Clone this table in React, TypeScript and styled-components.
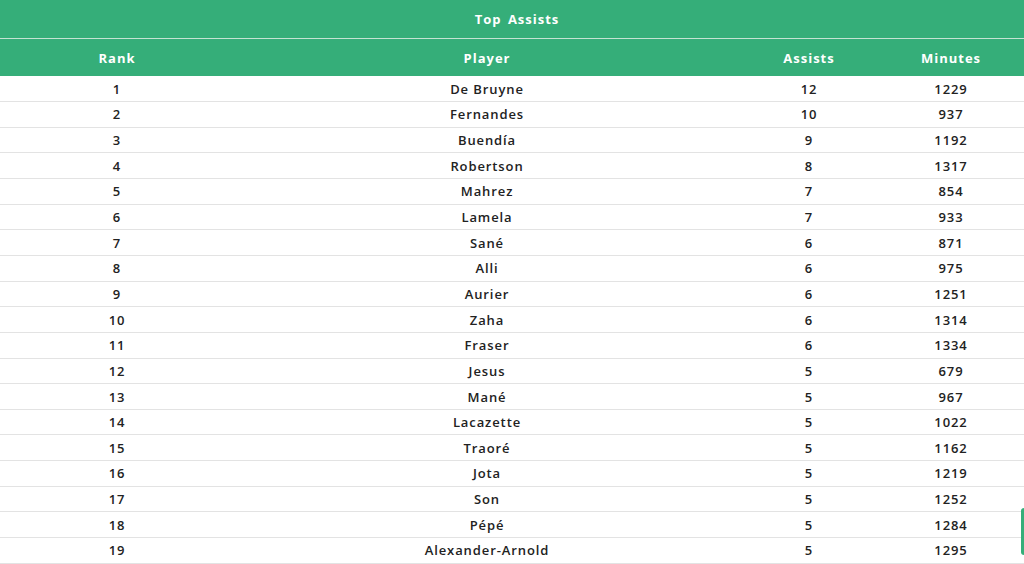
import React from "react";
import styled, { createGlobalStyle } from "styled-components";

const Global = createGlobalStyle`
  html, body { margin: 0; padding: 0; background: #fff; }
  body { font-family: "Open Sans", "Noto Sans", sans-serif; overflow: hidden; }
`;

const GREEN = "#35ae79";

const Page = styled.div`
  width: 1024px;
  height: 564px;
  overflow: hidden;
  position: relative;
`;

const Table = styled.table`
  width: 1024px;
  border-collapse: collapse;
  table-layout: fixed;
`;

const TitleCell = styled.th`
  background: ${GREEN};
  color: #fff;
  height: 38px;
  padding: 0 0 0 10px;
  font-size: 13px;
  font-weight: 700;
  letter-spacing: 1px;
  word-spacing: 2px;
  text-align: center;
  border-bottom: 1px solid #c4e3d3;
`;

const HeadCell = styled.th`
  background: ${GREEN};
  color: #fff;
  height: 37px;
  padding: 0;
  font-size: 13px;
  font-weight: 700;
  letter-spacing: 1px;
  text-align: center;
`;

const Row = styled.tr`
  height: 25.65px;
  border-bottom: 1px solid #e3e3e3;
`;

const Cell = styled.td`
  padding: 0;
  color: #222;
  font-size: 13px;
  font-weight: 600;
  letter-spacing: 0.9px;
  text-align: center;
`;

const SideTab = styled.div`
  position: absolute;
  right: 0;
  top: 508px;
  width: 3px;
  height: 47px;
  background: ${GREEN};
  border-radius: 3px 0 0 3px;
`;

const data: [string, number, number][] = [
  ["De Bruyne", 12, 1229],
  ["Fernandes", 10, 937],
  ["Buendía", 9, 1192],
  ["Robertson", 8, 1317],
  ["Mahrez", 7, 854],
  ["Lamela", 7, 933],
  ["Sané", 6, 871],
  ["Alli", 6, 975],
  ["Aurier", 6, 1251],
  ["Zaha", 6, 1314],
  ["Fraser", 6, 1334],
  ["Jesus", 5, 679],
  ["Mané", 5, 967],
  ["Lacazette", 5, 1022],
  ["Traoré", 5, 1162],
  ["Jota", 5, 1219],
  ["Son", 5, 1252],
  ["Pépé", 5, 1284],
  ["Alexander-Arnold", 5, 1295],
];

export default function App() {
  return (
    <Page>
      <Global />
      <Table>
        <colgroup>
          <col style={{ width: 234 }} />
          <col style={{ width: 506 }} />
          <col style={{ width: 138 }} />
          <col style={{ width: 146 }} />
        </colgroup>
        <thead>
          <tr>
            <TitleCell colSpan={4}>Top Assists</TitleCell>
          </tr>
          <tr>
            <HeadCell>Rank</HeadCell>
            <HeadCell>Player</HeadCell>
            <HeadCell>Assists</HeadCell>
            <HeadCell>Minutes</HeadCell>
          </tr>
        </thead>
        <tbody>
          {data.map(([name, a, m], i) => (
            <Row key={name}>
              <Cell>{i + 1}</Cell>
              <Cell>{name}</Cell>
              <Cell>{a}</Cell>
              <Cell>{m}</Cell>
            </Row>
          ))}
        </tbody>
      </Table>
      <SideTab />
    </Page>
  );
}
